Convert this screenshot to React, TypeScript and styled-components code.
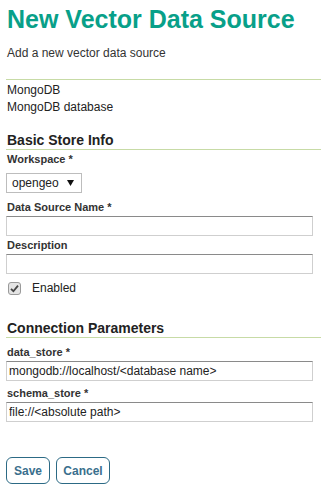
import React from "react";
import styled, { createGlobalStyle } from "styled-components";

const Global = createGlobalStyle`
  html, body { margin: 0; padding: 0; background: #fff; }
  body { font-family: "Liberation Sans", Arial, sans-serif; color: #333; }
  * { box-sizing: border-box; }
`;

const Page = styled.div`
  padding: 4px 0 0 6px;
  width: 321px;
`;

const Title = styled.h1`
  margin: 0 0 0 1px;
  font-size: 25px;
  line-height: 30px;
  font-weight: bold;
  color: #08a089;
`;

const Subtitle = styled.p`
  margin: 10px 0 0 1px;
  font-size: 12px;
  line-height: 18px;
  color: #333;
`;

const Rule = styled.div`
  margin-top: 17px;
  height: 1px;
  background: #c7dba6;
`;

const Info = styled.div`
  margin: 2px 0 0 1px;
  font-size: 12px;
  line-height: 17px;
  color: #222;
`;

const Heading = styled.h2<{ $top: number }>`
  margin: ${(p) => p.$top}px 0 0 0;
  padding-left: 1px;
  font-size: 14px;
  line-height: 17px;
  font-weight: bold;
  color: #222;
  border-bottom: 1px solid #c7dba6;
`;

const Label = styled.label<{ $top: number }>`
  display: block;
  margin: ${(p) => p.$top}px 0 2px 1px;
  font-size: 11px;
  line-height: 14px;
  font-weight: bold;
  color: #333;
`;

const TextInput = styled.input`
  display: block;
  width: 307px;
  height: 20px;
  margin: 0;
  padding: 0 2px;
  font-family: "Liberation Sans", Arial, sans-serif;
  font-size: 12px;
  color: #222;
  background: #fff;
  border: 1px solid #cfcfcf;
  border-top-color: #8a8a8a;
  outline: none;
`;

const SelectBox = styled.div`
  margin-top: 7px;
  width: 76px;
  height: 20px;
  display: flex;
  align-items: center;
  justify-content: space-between;
  padding: 0 7px 0 5px;
  border: 1px solid #bdbdbd;
  font-size: 12px;
  color: #222;
  background: #fff;
`;

const CheckRow = styled.div`
  margin-top: 7px;
  display: flex;
  align-items: center;
  gap: 11px;
  padding-left: 2px;
  font-size: 12px;
  line-height: 14px;
  color: #222;
`;

const Box = styled.span`
  width: 13px;
  height: 13px;
  border: 1px solid #9a9a9a;
  border-radius: 3px;
  background: #e4e4e4;
  display: flex;
  align-items: center;
  justify-content: center;
`;

const Buttons = styled.div`
  margin-top: 35px;
  display: flex;
  gap: 6px;
`;

const Button = styled.button<{ $w: number }>`
  width: ${(p) => p.$w}px;
  height: 27px;
  padding: 0;
  border: 1px solid #2c6a85;
  border-radius: 6px;
  background: #fff;
  font-family: "Liberation Sans", Arial, sans-serif;
  font-size: 12px;
  font-weight: bold;
  color: #3a6f8d;
`;

export default function App() {
  return (
    <>
      <Global />
      <Page>
        <Title>New Vector Data Source</Title>
        <Subtitle>Add a new vector data source</Subtitle>
        <Rule />
        <Info>
          MongoDB
          <br />
          MongoDB database
        </Info>

        <Heading $top={16}>Basic Store Info</Heading>
        <Label $top={2}>Workspace *</Label>
        <SelectBox>
          <span>opengeo</span>
          <svg width="7" height="6" viewBox="0 0 7 6">
            <path d="M0 0 H7 L3.5 6 Z" fill="#111" />
          </svg>
        </SelectBox>
        <Label $top={7}>Data Source Name *</Label>
        <TextInput defaultValue="" />
        <Label $top={2}>Description</Label>
        <TextInput defaultValue="" />
        <CheckRow>
          <Box>
            <svg width="9" height="9" viewBox="0 0 9 9">
              <path d="M1 4.8 L3.4 7.2 L8 1.6" fill="none" stroke="#444" strokeWidth="1.8" />
            </svg>
          </Box>
          <span>Enabled</span>
        </CheckRow>

        <Heading $top={25}>Connection Parameters</Heading>
        <Label $top={7}>data_store *</Label>
        <TextInput defaultValue="mongodb://localhost/<database name>" />
        <Label $top={5}>schema_store *</Label>
        <TextInput defaultValue="file://<absolute path>" />

        <Buttons>
          <Button $w={44}>Save</Button>
          <Button $w={54}>Cancel</Button>
        </Buttons>
      </Page>
    </>
  );
}
